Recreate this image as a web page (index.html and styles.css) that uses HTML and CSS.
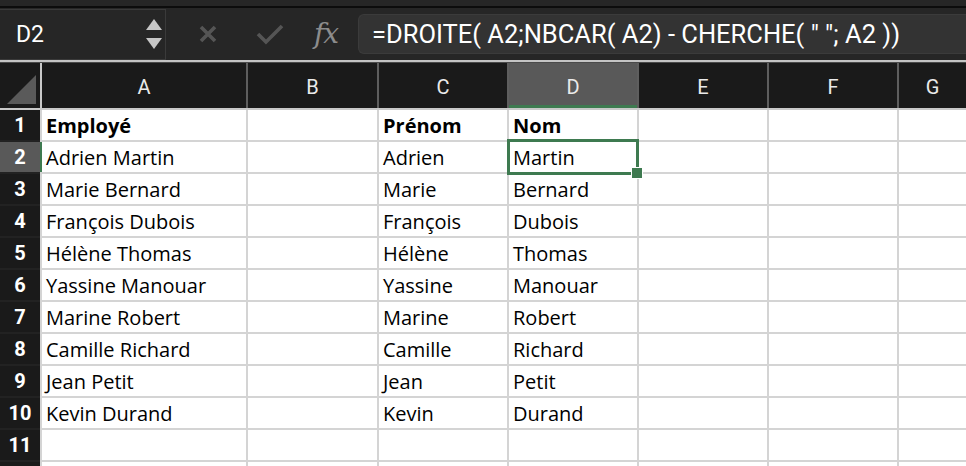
FILE: index.html
```html
<!DOCTYPE html>
<html lang="fr">
<head>
<meta charset="utf-8">
<title>Feuille</title>
<link rel="stylesheet" href="styles.css">
</head>
<body>
<div class="topstrip"></div>
<div class="toolbar">
  <div class="namebox">
    <span class="ref">D2</span>
    <span class="spin"><span class="up"></span><span class="down"></span></span>
  </div>
  <div class="tbtn cancel">
    <svg width="20" height="20" viewBox="0 0 20 20"><path d="M3 3 L17 17 M17 3 L3 17" stroke="#555" stroke-width="3.6" stroke-linecap="butt"/></svg>
  </div>
  <div class="tbtn ok">
    <svg width="28" height="22" viewBox="0 0 28 22"><path d="M2 11 L10 19 L26 3" fill="none" stroke="#555" stroke-width="3.6"/></svg>
  </div>
  <div class="fx">fx</div>
  <div class="formula">=DROITE( A2;NBCAR( A2) - CHERCHE( " "; A2 ))</div>
</div>
<div class="sep"></div>
<div class="colhead">
  <div class="corner"><span class="tri"></span></div>
  <div class="ch">A</div>
  <div class="ch">B</div>
  <div class="ch">C</div>
  <div class="ch active">D</div>
  <div class="ch">E</div>
  <div class="ch">F</div>
  <div class="ch">G</div>
</div>
<div class="grid">
  <div class="rh">1</div><div class="c b">Employé</div><div class="c"></div><div class="c b">Prénom</div><div class="c b">Nom</div><div class="c"></div><div class="c"></div><div class="c"></div>
  <div class="rh active">2</div><div class="c">Adrien Martin</div><div class="c"></div><div class="c">Adrien</div><div class="c sel">Martin<span class="selbox"><span class="handle"></span></span></div><div class="c"></div><div class="c"></div><div class="c"></div>
  <div class="rh">3</div><div class="c">Marie Bernard</div><div class="c"></div><div class="c">Marie</div><div class="c">Bernard</div><div class="c"></div><div class="c"></div><div class="c"></div>
  <div class="rh">4</div><div class="c">François Dubois</div><div class="c"></div><div class="c">François</div><div class="c">Dubois</div><div class="c"></div><div class="c"></div><div class="c"></div>
  <div class="rh">5</div><div class="c">Hélène Thomas</div><div class="c"></div><div class="c">Hélène</div><div class="c">Thomas</div><div class="c"></div><div class="c"></div><div class="c"></div>
  <div class="rh">6</div><div class="c">Yassine Manouar</div><div class="c"></div><div class="c">Yassine</div><div class="c">Manouar</div><div class="c"></div><div class="c"></div><div class="c"></div>
  <div class="rh">7</div><div class="c">Marine Robert</div><div class="c"></div><div class="c">Marine</div><div class="c">Robert</div><div class="c"></div><div class="c"></div><div class="c"></div>
  <div class="rh">8</div><div class="c">Camille Richard</div><div class="c"></div><div class="c">Camille</div><div class="c">Richard</div><div class="c"></div><div class="c"></div><div class="c"></div>
  <div class="rh">9</div><div class="c">Jean Petit</div><div class="c"></div><div class="c">Jean</div><div class="c">Petit</div><div class="c"></div><div class="c"></div><div class="c"></div>
  <div class="rh">10</div><div class="c">Kevin Durand</div><div class="c"></div><div class="c">Kevin</div><div class="c">Durand</div><div class="c"></div><div class="c"></div><div class="c"></div>
  <div class="rh">11</div><div class="c"></div><div class="c"></div><div class="c"></div><div class="c"></div><div class="c"></div><div class="c"></div><div class="c"></div>
  <div class="rh"></div><div class="c"></div><div class="c"></div><div class="c"></div><div class="c"></div><div class="c"></div><div class="c"></div><div class="c"></div>
</div>
</body>
</html>
```
FILE: styles.css
```css
html, body {
  margin: 0;
  padding: 0;
  width: 966px;
  height: 466px;
  overflow: hidden;
  background: #262626;
  font-family: Roboto, "Liberation Sans", sans-serif;
}

.topstrip {
  height: 6px;
  background: #262626;
  border-bottom: 2px solid #0c0c0c;
}

.toolbar {
  height: 52px;
  background: #262626;
  display: flex;
  align-items: center;
}

.namebox {
  box-sizing: border-box;
  width: 166px;
  height: 51px;
  border: 1px solid #3a3a3a;
  border-left: none;
  display: flex;
  align-items: center;
  justify-content: space-between;
  padding: 0 3px 0 16px;
}

.ref {
  color: #ffffff;
  font-size: 23px;
}

.spin {
  display: flex;
  flex-direction: column;
  gap: 8px;
}

.up, .down {
  width: 0;
  height: 0;
  border-left: 8px solid transparent;
  border-right: 8px solid transparent;
}

.up {
  border-bottom: 11px solid #c6c6c6;
}

.down {
  border-top: 11px solid #c6c6c6;
}

.tbtn {
  display: flex;
  align-items: center;
  justify-content: center;
}

.cancel {
  margin-left: 32px;
  width: 20px;
}

.ok {
  margin-left: 38px;
  width: 28px;
}

.fx {
  margin-left: 30px;
  color: #8c8c8c;
  font-family: "DejaVu Serif", "Liberation Serif", serif;
  font-style: italic;
  font-size: 28px;
  width: 32px;
  letter-spacing: -1px;
  margin-top: -2px;
}

.formula {
  box-sizing: border-box;
  margin-left: 12px;
  flex: 1;
  height: 40px;
  background: #333333;
  border: 1px solid #3b3b3b;
  border-right: none;
  border-radius: 6px 0 0 6px;
  color: #ffffff;
  font-size: 25.5px;
  padding-left: 13px;
  display: flex;
  align-items: center;
  white-space: nowrap;
}

.sep {
  height: 2px;
  background: #c4c4c4;
  border-bottom: 1px solid #4a4a4a;
}

.colhead {
  display: grid;
  grid-template-columns: 40px 204px 129px 128px 128px 128px 128px 1fr;
  column-gap: 2px;
  height: 45px;
  background: #5e5e5e;
  border-bottom: 2px solid #c9c9c9;
}

.corner {
  position: relative;
  background: #1a1a1a;
  box-shadow: 2px 0 0 #c9c9c9;
}

.tri {
  position: absolute;
  left: 7px;
  bottom: 4px;
  width: 0;
  height: 0;
  border-left: 29px solid transparent;
  border-bottom: 29px solid #5a5a5a;
}

.ch {
  color: #eaeaea;
  font-size: 20px;
  display: flex;
  align-items: center;
  justify-content: center;
  background: #1a1a1a;
  padding-top: 2px;
}

.ch.active {
  background: #595959;
  box-shadow: inset 0 -3px 0 #3e7a50;
}

.grid {
  display: grid;
  grid-template-columns: 40px 204px 129px 128px 128px 128px 128px 1fr;
  grid-auto-rows: 30px;
  column-gap: 2px;
  row-gap: 2px;
  background: #d4d4d4;
}

.rh {
  background: #1a1a1a;
  color: #ffffff;
  font-weight: 700;
  font-size: 20px;
  display: flex;
  align-items: center;
  justify-content: center;
  box-shadow: 0 2px 0 #222;
}

.rh.active {
  background: #595959;
  box-shadow: 2px 0 0 #3e7a50, 0 2px 0 #222;
}

.c {
  background: #ffffff;
  color: #000000;
  font-family: "Open Sans", Roboto, sans-serif;
  font-size: 20px;
  display: flex;
  align-items: center;
  padding-left: 4px;
  white-space: nowrap;
  overflow: visible;
}

.c.b {
  font-weight: 700;
}

.sel {
  position: relative;
}

.selbox {
  position: absolute;
  left: -2px;
  right: -2px;
  top: -3px;
  bottom: -3px;
  border: 3px solid #3e7a50;
}

.handle {
  position: absolute;
  right: -7px;
  bottom: -7px;
  width: 10px;
  height: 10px;
  background: #3e7a50;
  border: 1px solid #ffffff;
}
```
